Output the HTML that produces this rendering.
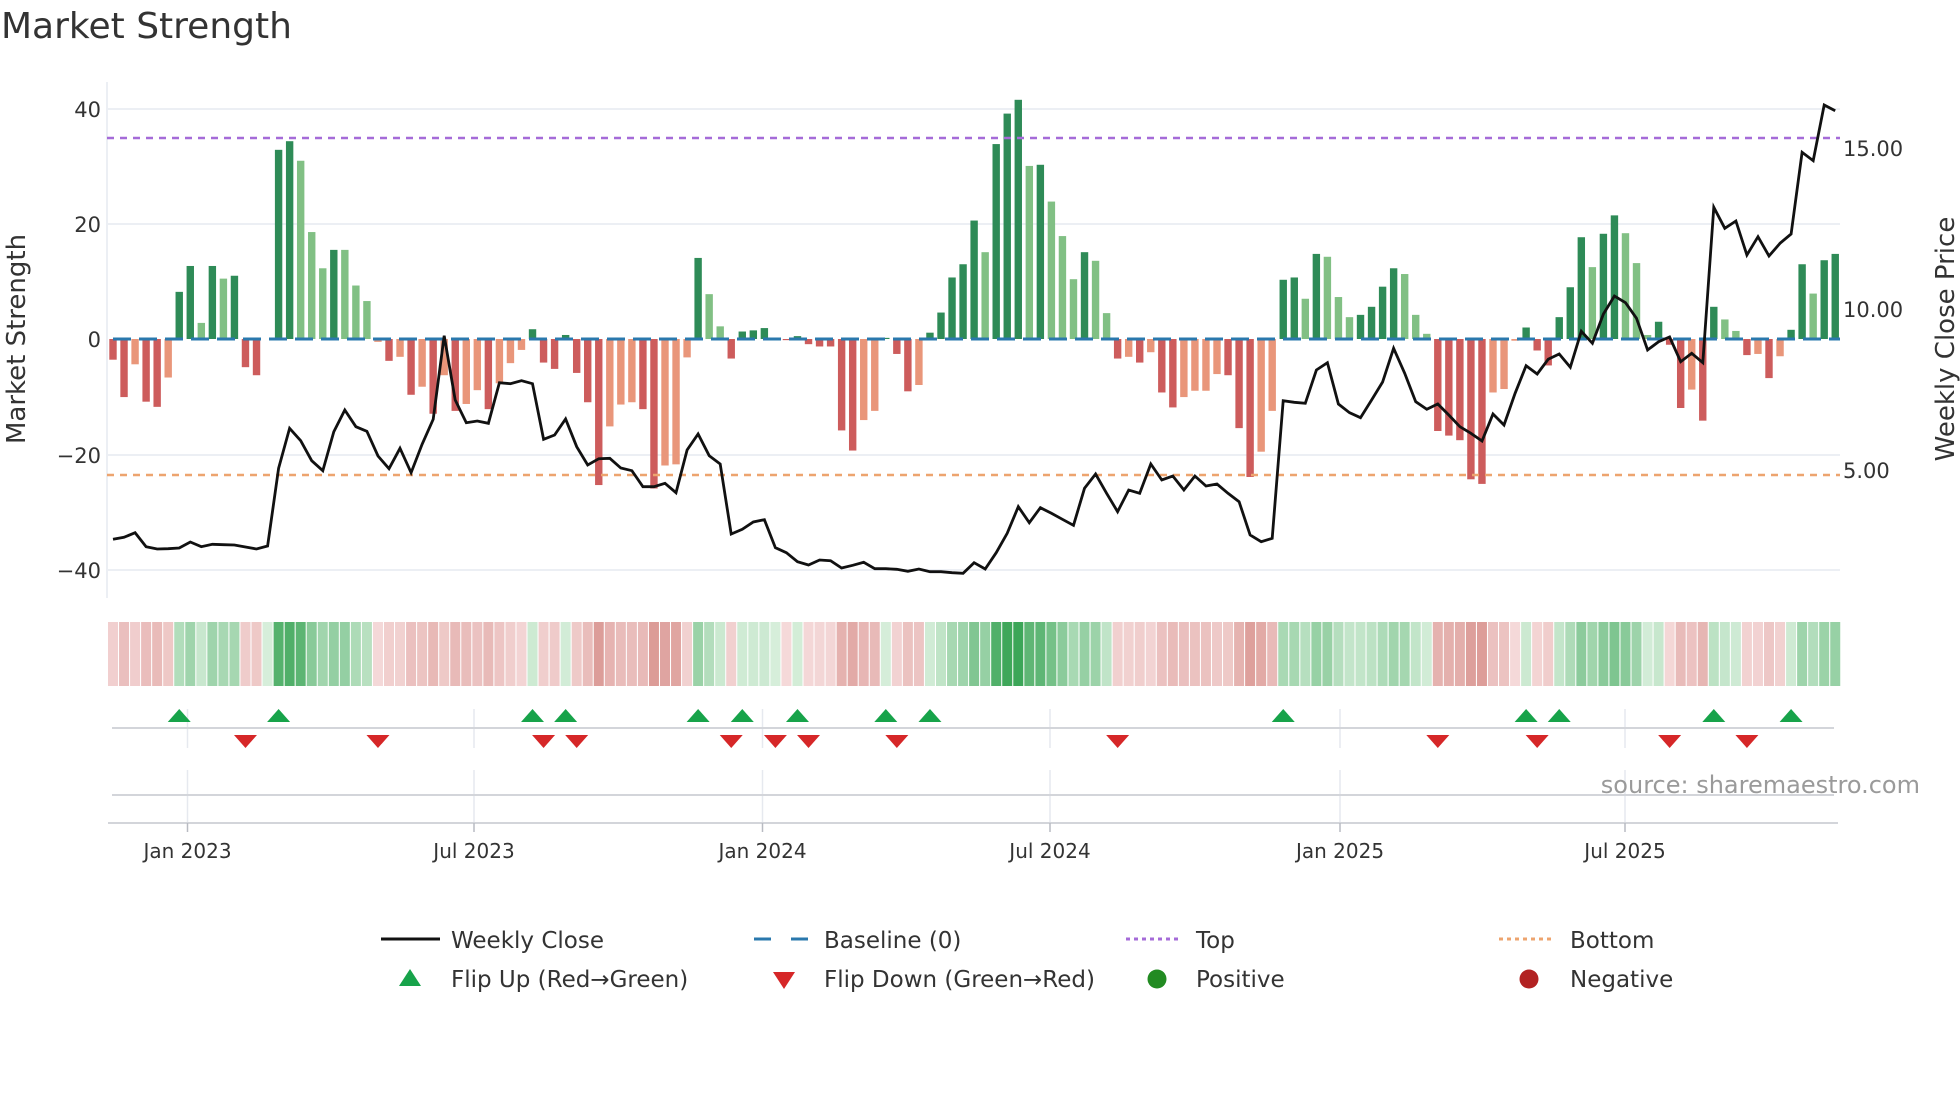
<!DOCTYPE html>
<html><head><meta charset="utf-8"><style>
html,body{margin:0;padding:0;background:#fff;width:1960px;height:1102px;overflow:hidden}
svg{display:block}
text{font-family:"DejaVu Sans","Liberation Sans",sans-serif;fill:#333}
</style></head><body>
<svg id="s" width="1960" height="1102" viewBox="0 0 1960 1102" xmlns="http://www.w3.org/2000/svg">
<text x="1" y="38" font-size="36" fill="#333">Market Strength</text>
<g id="grid" stroke="#eceff4" stroke-width="2">
<line x1="107" y1="109" x2="1840" y2="109"/>
<line x1="107" y1="224" x2="1840" y2="224"/>
<line x1="107" y1="455" x2="1840" y2="455"/>
<line x1="107" y1="570" x2="1840" y2="570"/>
<line x1="107" y1="82" x2="107" y2="598"/>
</g>
<g font-size="21" text-anchor="end">
<text x="101" y="117">40</text>
<text x="101" y="232">20</text>
<text x="101" y="347">0</text>
<text x="101" y="463">−20</text>
<text x="101" y="578">−40</text>
</g>
<g font-size="21">
<text x="1843" y="156">15.00</text>
<text x="1843" y="317">10.00</text>
<text x="1843" y="478">5.00</text>
</g>
<text transform="translate(25,339) rotate(-90)" font-size="26" text-anchor="middle">Market Strength</text>
<text transform="translate(1954,339) rotate(-90)" font-size="26" text-anchor="middle">Weekly Close Price</text>
<g id="bars"></g>
<line x1="107" y1="138" x2="1840" y2="138" stroke="#a56bd8" stroke-width="2.5" stroke-dasharray="7 6"/>
<line x1="107" y1="475" x2="1840" y2="475" stroke="#eda46f" stroke-width="2.5" stroke-dasharray="7 6"/>
<g id="base"></g>
<polyline id="price" fill="none" stroke="#111" stroke-width="2.8" stroke-linejoin="miter"/>
<g id="heat"></g>
<g stroke="#e6e9ef" stroke-width="1.5">
<line x1="187.5" y1="709" x2="187.5" y2="748"/><line x1="474" y1="709" x2="474" y2="748"/>
<line x1="762.5" y1="709" x2="762.5" y2="748"/><line x1="1050" y1="709" x2="1050" y2="748"/>
<line x1="1340" y1="709" x2="1340" y2="748"/><line x1="1625" y1="709" x2="1625" y2="748"/>
<line x1="187.5" y1="770" x2="187.5" y2="823"/><line x1="474" y1="770" x2="474" y2="823"/>
<line x1="762.5" y1="770" x2="762.5" y2="823"/><line x1="1050" y1="770" x2="1050" y2="823"/>
<line x1="1340" y1="770" x2="1340" y2="823"/><line x1="1625" y1="770" x2="1625" y2="823"/>
</g>
<g stroke="#d3d5da" stroke-width="2">
<line x1="112" y1="728" x2="1834" y2="728"/>
<line x1="112" y1="795" x2="1834" y2="795"/>
<line x1="108" y1="823" x2="1838" y2="823"/>
</g>
<g stroke="#b8bbc2" stroke-width="1.5">
<line x1="187.5" y1="823" x2="187.5" y2="832"/><line x1="474" y1="823" x2="474" y2="832"/>
<line x1="762.5" y1="823" x2="762.5" y2="832"/><line x1="1050" y1="823" x2="1050" y2="832"/>
<line x1="1340" y1="823" x2="1340" y2="832"/><line x1="1625" y1="823" x2="1625" y2="832"/>
</g>
<g id="marks"></g>
<text x="1920" y="793" font-size="24" text-anchor="end" style="fill:#9a9a9a">source: sharemaestro.com</text>
<g font-size="20" text-anchor="middle">
<text x="187.5" y="858">Jan 2023</text><text x="474" y="858">Jul 2023</text>
<text x="762.5" y="858">Jan 2024</text><text x="1050" y="858">Jul 2024</text>
<text x="1340" y="858">Jan 2025</text><text x="1625" y="858">Jul 2025</text>
</g>
<g font-size="23">
<line x1="381" y1="939" x2="440" y2="939" stroke="#111" stroke-width="3"/>
<text x="451" y="948">Weekly Close</text>
<line x1="754" y1="939" x2="808" y2="939" stroke="#2a78ad" stroke-width="3" stroke-dasharray="17 20"/>
<text x="824" y="948">Baseline (0)</text>
<line x1="1126" y1="939" x2="1181" y2="939" stroke="#a56bd8" stroke-width="3" stroke-dasharray="4 4"/>
<text x="1196" y="948">Top</text>
<line x1="1499" y1="939" x2="1554" y2="939" stroke="#eda46f" stroke-width="3" stroke-dasharray="4 4"/>
<text x="1570" y="948">Bottom</text>
<polygon points="410,969 399,986 421,986" fill="#17a34a"/>
<text x="451" y="987">Flip Up (Red→Green)</text>
<polygon points="773,972 795,972 784,989" fill="#d62728"/>
<text x="824" y="987">Flip Down (Green→Red)</text>
<circle cx="1157" cy="979" r="9.5" fill="#228b22"/>
<text x="1196" y="987">Positive</text>
<circle cx="1529" cy="979" r="9.5" fill="#b22222"/>
<text x="1570" y="987">Negative</text>
</g>
</svg>
<script>
var V=[-3.6,-10.1,-4.4,-10.9,-11.8,-6.7,8.2,12.7,2.8,12.7,10.5,11,-4.9,-6.3,0,32.9,34.4,31,18.6,12.3,15.5,15.5,9.3,6.6,-0.5,-3.8,-3.1,-9.7,-8.3,-13,-6.3,-12.5,-11.3,-8.9,-12.2,-7.7,-4.2,-1.9,1.7,-4.1,-5.2,0.7,-5.9,-11,-25.4,-15.2,-11.4,-11,-12.2,-26,-22,-21.8,-3.2,14.1,7.8,2.2,-3.4,1.3,1.5,1.9,0,-0.2,0.5,-0.9,-1.3,-1.3,-15.9,-19.4,-14.1,-12.5,0.2,-2.6,-9.1,-8,1.1,4.6,10.7,13,20.6,15.1,33.9,39.2,41.6,30.1,30.3,23.9,17.9,10.4,15.1,13.6,4.5,-3.4,-3.1,-4.1,-2.3,-9.3,-11.9,-10.1,-9,-9,-6.1,-6.3,-15.5,-24,-19.6,-12.5,10.3,10.7,7,14.8,14.3,7.3,3.8,4.2,5.6,9.1,12.3,11.3,4.2,0.9,-16,-16.8,-17.6,-24.4,-25.2,-9.3,-8.7,-0.3,2,-2,-4.6,3.8,9,17.7,12.5,18.3,21.5,18.4,13.2,0.7,3,-1,-12,-8.8,-14.2,5.6,3.4,1.4,-2.8,-2.6,-6.8,-3,1.6,13,7.9,13.7,14.8];
var P=[1348,1342,1328,1370,1377,1376,1374,1356,1370,1363,1364,1365,1371,1377,1368,1135,1015,1052,1112,1142,1025,960,1010,1024,1098,1136,1075,1148,1063,988,737,930,998,993,1000,878,881,872,881,1048,1035,
987,1070,1125,1106,1105,1134,1142,1190,1190,1180,1208,1080,1032,1097,1122,1332,1318,1296,1289,1373,1388,1415,1425,1410,1412,1434,1426,1417,1436,1436,1438,1444,1437,1445,1445,1448,1450,1418,1437,1388,
1330,1250,1298,1253,1270,1288,1306,1195,1152,1210,1265,1200,1210,1122,1170,1158,1200,1158,1188,1182,1210,1235,1335,1355,1345,932,937,940,840,818,942,968,983,930,876,775,850,935,958,942,
975,1010,1030,1053,972,1005,910,827,852,808,792,832,724,760,672,618,638,685,780,755,741,815,790,818,352,415,393,495,440,498,460,432,187,212,45,62];
var DL={0:1,1:1,2:0,3:1,4:1,5:0,6:1,7:1,8:0,9:1,10:0,11:1,12:1,13:1,14:1,15:1,16:1,17:0,18:0,19:0,20:1,21:0,22:0,23:0,24:0,25:1,26:0,27:1,28:0,29:1,30:0,31:1,32:0,33:0,34:1,35:0,36:0,37:0,38:1,39:1,40:1,41:1,42:1,43:1,44:1,45:0,46:0,47:0,48:1,49:1,50:0,51:0,52:0,53:1,54:0,55:0,56:1,57:1,58:1,59:1,60:1,61:1,62:1,63:1,64:1,65:1,66:1,67:1,68:0,69:0,70:1,71:1,72:1,73:0,74:1,75:1,76:1,77:1,78:1,79:0,80:1,81:1,82:1,83:0,84:1,85:0,86:0,87:0,88:1,89:0,90:0,91:1,92:0,93:1,94:0,95:1,96:1,97:0,98:0,99:0,100:0,101:1,102:1,103:1,104:0,105:0,106:1,107:1,108:0,109:1,110:0,111:0,112:0,113:1,114:1,115:1,116:1,117:0,118:0,119:0,120:1,121:1,122:1,123:1,124:1,125:0,126:0,127:0,128:1,129:1,130:1,131:1,132:1,133:1,134:0,135:1,136:1,137:0,138:0,139:0,140:1,141:1,142:1,143:0,144:1,145:1,146:0,147:0,148:1,149:0,150:1,151:0,152:1,153:1,154:0,155:1,156:1};
var NS="http://www.w3.org/2000/svg";
function el(t,a,p){var e=document.createElementNS(NS,t);for(var k in a)e.setAttribute(k,a[k]);p.appendChild(e);return e;}
var bars=document.getElementById('bars'),heat=document.getElementById('heat'),marks=document.getElementById('marks');
var X0=113,DX=11.04,Z=339,K=5.75,W=7.4;
var pts=[];
function mix(a,b,t){return 'rgb('+a.map(function(v,i){return Math.round(v+(b[i]-v)*t)}).join(',')+')';}
for(var i=0;i<V.length;i++){
  var x=X0+i*DX,v=V[i],dk=DL[i];
  if(Math.abs(v)>0.05){
    var y=Z-v*K;var c=v>0?(dk?'#2e8b57':'#81c084'):(dk?'#cd5c5c':'#e9967a');
    el('rect',{x:x-W/2,y:Math.min(y,Z),width:W,height:Math.abs(v*K),fill:c},bars);
  }
  var t=Math.min(1,Math.abs(v)/40);
  var hc=v>=0?mix([214,238,218],[60,166,88],Math.pow(t,0.9)):mix([245,218,218],[208,126,120],Math.pow(t,0.9));
  el('rect',{x:x-5,y:622,width:10,height:64,fill:hc},heat);
  pts.push(x.toFixed(1)+','+(90+P[i]/3).toFixed(1));
}
document.getElementById('price').setAttribute('points',pts.join(' '));
el('line',{x1:113,y1:Z,x2:1840,y2:Z,stroke:'#2a78ad','stroke-width':3,'stroke-dasharray':'18 8'},document.getElementById('base'));
var ups=[6,15,38,41,53,57,62,70,74,106,128,131,145,152],dns=[12,24,39,42,56,60,63,71,91,120,129,141,148];
ups.forEach(function(i){var x=X0+i*DX;el('polygon',{points:(x-11.5)+',722 '+(x+11.5)+',722 '+x+',709',fill:'#17a34a'},marks);});
dns.forEach(function(i){var x=X0+i*DX;el('polygon',{points:(x-11.5)+',735 '+(x+11.5)+',735 '+x+',748',fill:'#d62728'},marks);});
</script>
</body></html>
